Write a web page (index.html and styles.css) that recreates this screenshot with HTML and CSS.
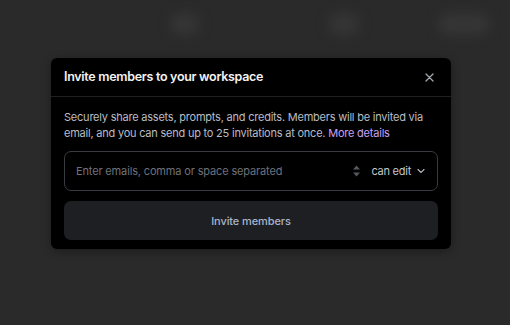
FILE: index.html
```html
<!DOCTYPE html>
<html lang="en">
<head>
    <meta charset="UTF-8">
    <meta name="viewport" content="width=device-width, initial-scale=1.0">
    <title>Invite members</title>
    <link rel="stylesheet" href="styles.css">
</head>
<body>
    <!-- page behind the dialog, blurred -->
    <div class="fundo">
        <span class="mancha m1"></span>
        <span class="mancha m2"></span>
        <span class="mancha m3"></span>
    </div>

    <div class="modal">
        <div class="modal-topo">
            <h2>Invite members to your workspace</h2>
            <button class="fechar" aria-label="Close">
                <svg width="9" height="9" viewBox="0 0 9 9"><path d="M1 1L8 8M8 1L1 8" stroke="#a3a8b2" stroke-width="1.3" stroke-linecap="round"/></svg>
            </button>
        </div>
        <div class="modal-corpo">
            <p class="descricao">Securely share assets, prompts, and credits. Members will be invited via email, and you can send up to 25 invitations at once. <a href="#">More details</a></p>
            <div class="campo">
                <input type="text" placeholder="Enter emails, comma or space separated">
                <svg class="setas" width="9" height="14" viewBox="0 0 9 14"><path d="M1 5.5L4.5 1.5L8 5.5Z" fill="#55585f"/><path d="M1 8.5L4.5 12.5L8 8.5Z" fill="#55585f"/></svg>
                <span class="permissao">can edit</span>
                <svg class="seta" width="8" height="6" viewBox="0 0 8 6"><path d="M1 1.5L4 4.5L7 1.5" stroke="#b8bcc4" stroke-width="1.1" fill="none" stroke-linecap="round"/></svg>
            </div>
            <button class="convidar">Invite members</button>
        </div>
    </div>
</body>
</html>
```

FILE: styles.css
```css
body {
    margin: 0;
    background: #2a2a2a;
    font-family: Inter, "Noto Sans", sans-serif;
    height: 325px;
    overflow: hidden;
}

.fundo {
    display: flex;
    align-items: center;
    height: 40px;
    padding-top: 4px;
}

.mancha {
    display: block;
    height: 22px;
    border-radius: 12px;
    background: #353535;
    filter: blur(6px);
}
.m1 { width: 30px; margin-left: 170px; }
.m2 { width: 32px; margin-left: 128px; }
.m3 { width: 52px; margin-left: 78px; }

.modal {
    margin-top: 14px;
    margin-left: 51px;
    width: 400px;
    background: #000;
    border-radius: 6px;
    box-shadow: 0 2px 10px rgba(0, 0, 0, 0.35);
}

.modal-topo {
    display: flex;
    align-items: center;
    justify-content: space-between;
    height: 38px;
    padding: 0 13px;
    border-bottom: 1px solid #1f2023;
}

.modal-topo h2 {
    margin: 0 0 1px;
    font-size: 12.5px;
    font-weight: 600;
    color: #f3f3f3;
    letter-spacing: -0.3px;
}

.fechar {
    background: none;
    border: none;
    padding: 0;
    margin-right: 4px;
    display: flex;
    cursor: pointer;
}

.modal-corpo {
    padding: 12px 13px 9px;
}

.descricao {
    margin: 0 0 10px;
    font-size: 11px;
    line-height: 16px;
    letter-spacing: -0.22px;
    color: #b9bdc5;
}

.descricao a {
    color: #c8a2f4;
    text-decoration: none;
}

.campo {
    display: flex;
    align-items: center;
    height: 38px;
    border: 1px solid #393b41;
    border-radius: 7px;
    padding: 0 12px 0 11px;
}

.campo input {
    flex: 1;
    background: none;
    border: none;
    outline: none;
    font-family: inherit;
    font-size: 11px;
    letter-spacing: -0.15px;
    color: #ddd;
    padding: 0;
}

.campo input::placeholder {
    color: #6e727b;
}

.setas {
    margin-right: 10px;
}

.permissao {
    font-size: 11px;
    letter-spacing: -0.25px;
    color: #c4c7cd;
    margin-right: 6px;
}

.convidar {
    display: block;
    width: 100%;
    height: 39px;
    margin-top: 10px;
    background: #1e1f23;
    border: none;
    border-radius: 7px;
    font-family: inherit;
    font-size: 11px;
    font-weight: 500;
    letter-spacing: -0.1px;
    color: #a9b5cc;
    cursor: pointer;
}
```
